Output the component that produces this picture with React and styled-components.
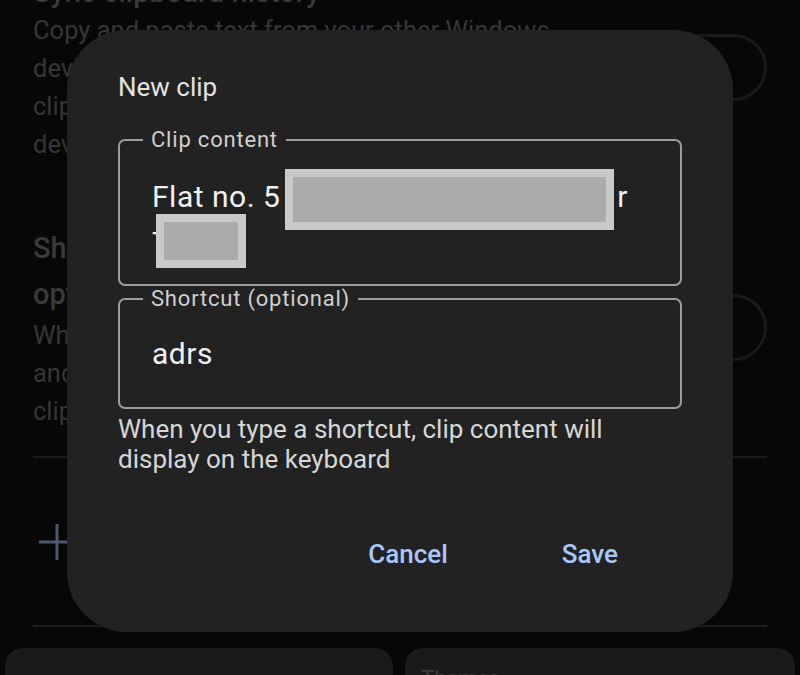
import React from "react";
import styled, { createGlobalStyle } from "styled-components";

const GlobalStyle = createGlobalStyle`
  html, body {
    margin: 0;
    padding: 0;
    background: #070707;
    font-family: Roboto, "Noto Sans", "Liberation Sans", sans-serif;
  }
  * {
    box-sizing: border-box;
  }
`;

const App = () => {
  return (
    <Page>
      <GlobalStyle />
      <SettingsList>
        <SettingRow>
          <SettingText>
            <SettingTitle>Sync clipboard history</SettingTitle>
            <SettingDesc>
              Copy and paste text from your other Windows
              <br />
              devices when you are signed in. Your synced
              <br />
              clips stay on this device and on your other
              <br />
              devices
            </SettingDesc>
          </SettingText>
          <Toggle />
        </SettingRow>
        <SettingRow $gap>
          <SettingText>
            <SettingTitle $tall>
              Show the most recent clipped item as a
              <br />
              option in the prediction bar
            </SettingTitle>
            <SettingDesc>
              When you copy text, it appears in the prediction
              <br />
              and can be pasted with a tap for one hour
              <br />
              clipping
            </SettingDesc>
          </SettingText>
          <Toggle />
        </SettingRow>
        <Divider />
        <AddRow>
          <svg width="36" height="36" viewBox="0 0 36 36">
            <path d="M0 18H36M18 0V36" stroke="#4d586d" strokeWidth="3" />
          </svg>
        </AddRow>
        <Divider $flush />
        <Cards>
          <Card />
          <Card>
            <CardTitle>Themes</CardTitle>
          </Card>
        </Cards>
      </SettingsList>

      <Dialog>
        <DialogTitle>New clip</DialogTitle>
        <Field>
          <Legend>Clip content</Legend>
          <FieldValue>
            Flat no. 5<Redact $w={329} $h={61} $ml={5} $mr={3} />r
            <br />
            T<Redact $w={90} $h={54} $ml={-14} $shift={-4} />
          </FieldValue>
        </Field>
        <Field $short>
          <Legend>Shortcut (optional)</Legend>
          <FieldValue>adrs</FieldValue>
        </Field>
        <Helper>
          When you type a shortcut, clip content will
          <br />
          display on the keyboard
        </Helper>
        <Actions>
          <TextButton>Cancel</TextButton>
          <TextButton>Save</TextButton>
        </Actions>
      </Dialog>
    </Page>
  );
};

export default App;

const Page = styled.div`
  position: relative;
  width: 800px;
  height: 675px;
  overflow: hidden;
  background: #070707;
`;

const SettingsList = styled.div`
  display: flex;
  flex-direction: column;
  padding: 0 33px;
  margin-top: -28px;
`;

const SettingRow = styled.div`
  display: flex;
  align-items: center;
  justify-content: space-between;
  gap: 20px;
  margin-top: ${(p) => (p.$gap ? "62px" : "0")};
`;

const SettingText = styled.div`
  flex: 1;
  min-width: 0;
  overflow: hidden;
  display: flex;
  flex-direction: column;
`;

const SettingTitle = styled.div`
  font-size: 29px;
  font-weight: 500;
  line-height: ${(p) => (p.$tall ? "46px" : "40px")};
  color: #3a3a3a;
  white-space: nowrap;
`;

const SettingDesc = styled.div`
  font-size: 25.5px;
  line-height: 38px;
  color: #363636;
  white-space: nowrap;
  margin-top: -1px;
`;

const Toggle = styled.div`
  flex: none;
  width: 120px;
  height: 67px;
  border: 3px solid #1a1a1a;
  border-radius: 34px;
`;

const Divider = styled.div`
  height: 2px;
  background: #1c1c1c;
  margin-top: ${(p) => (p.$flush ? "0" : "26px")};
`;

const AddRow = styled.div`
  height: 167px;
  display: flex;
  align-items: center;
  padding-left: 6px;
`;

const Cards = styled.div`
  display: grid;
  grid-template-columns: 388px 390px;
  gap: 12px;
  margin: 21px -28px 0;
`;

const Card = styled.div`
  height: 120px;
  background: #1a1a1a;
  border-radius: 18px;
  padding: 18px 16px;
`;

const CardTitle = styled.div`
  font-size: 22px;
  color: #3c3c3c;
`;

const Dialog = styled.div`
  position: absolute;
  left: 67px;
  top: 30px;
  width: 666px;
  height: 602px;
  background: #222222;
  border-radius: 60px;
  padding: 40px 51px 0;
  display: flex;
  flex-direction: column;
`;

const DialogTitle = styled.div`
  font-size: 26px;
  line-height: 34px;
  color: #e2e2e2;
  margin-bottom: 23px;
`;

const Field = styled.fieldset`
  margin: 0;
  border: 2px solid #9c9c9c;
  border-radius: 7px;
  padding: ${(p) => (p.$short ? "6px 30px 31px 32px" : "8px 30px 19px 32px")};
  min-width: 0;
`;

const Legend = styled.legend`
  font-size: 22px;
  letter-spacing: 0.8px;
  line-height: 26px;
  color: #cfcfcf;
  padding: 0 8px;
  margin-left: -9px;
`;

const FieldValue = styled.div`
  font-size: 30px;
  letter-spacing: 0.5px;
  line-height: 44px;
  color: #f1f1f1;
  padding-top: 14px;
`;

const Redact = styled.span`
  display: inline-block;
  vertical-align: middle;
  width: ${(p) => p.$w}px;
  height: ${(p) => p.$h}px;
  margin: ${(p) => -9 + (p.$shift || 0)}px ${(p) => p.$mr || 0}px
    ${(p) => -9 - (p.$shift || 0)}px ${(p) => p.$ml}px;
  background: #ababab;
  border: 8px solid #c9c9c9;
`;

const Helper = styled.div`
  font-size: 26px;
  line-height: 30px;
  color: #d6d6d6;
  margin-top: 5px;
`;

const Actions = styled.div`
  display: flex;
  justify-content: flex-end;
  gap: 58px;
  margin-top: 52px;
  padding-right: 36px;
`;

const TextButton = styled.button`
  font-family: Roboto, "Noto Sans", "Liberation Sans", sans-serif;
  font-size: 26px;
  font-weight: 500;
  line-height: 56px;
  color: #a8c7fa;
  background: none;
  border: none;
  padding: 0 28px;
`;
